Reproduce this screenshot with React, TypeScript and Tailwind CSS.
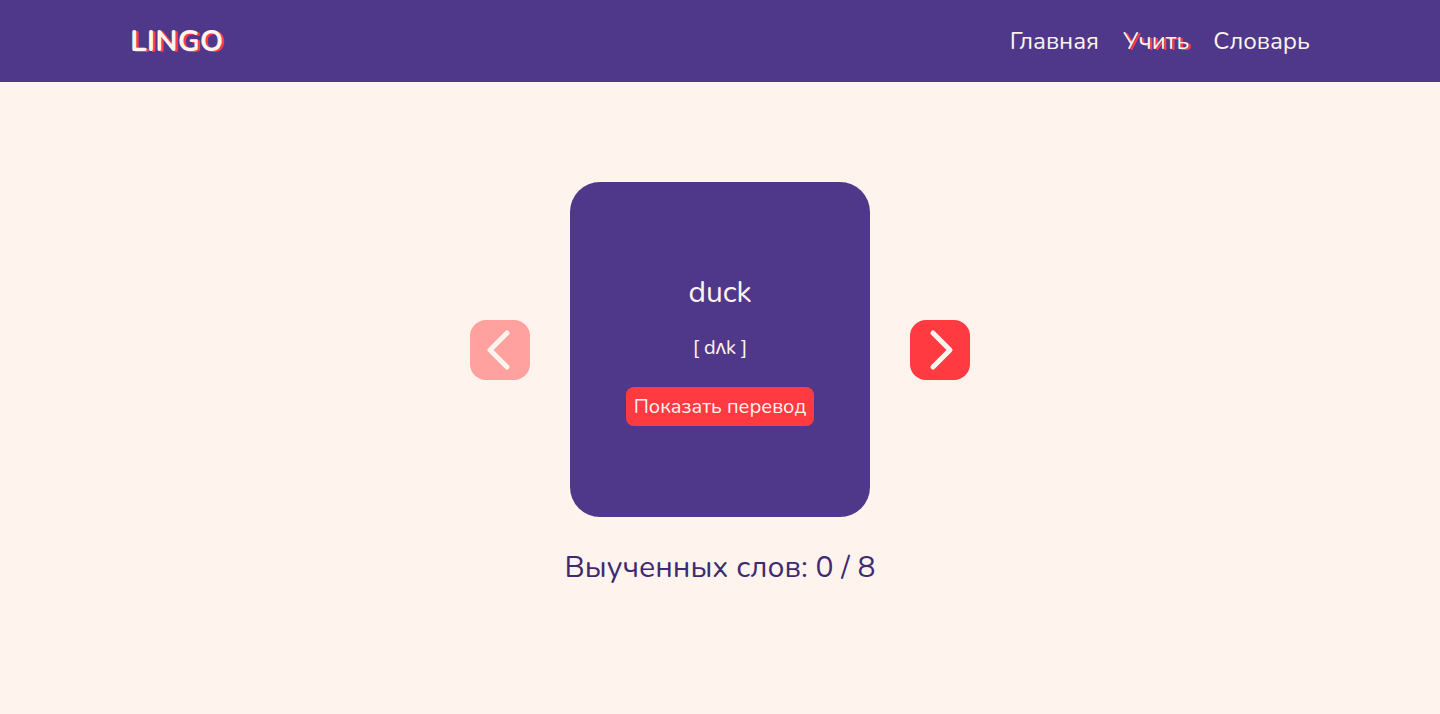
import React from "react";

export default function App() {
  const font = { fontFamily: '"Nunito", "Noto Sans", "Open Sans", sans-serif' };
  return (
    <div className="min-h-[714px] bg-[#FFF3EE]" style={font}>
      <header className="h-[82px] bg-[#4F3889]">
        <div className="mx-auto flex h-full w-[1180px] items-center justify-between">
          <div className="text-[30px] font-bold text-[#FFF3EE] [text-shadow:2px_1px_0_#FF3A40]">LINGO</div>
          <nav className="flex items-center gap-[24px] text-[24px] text-[#FFF3EE]">
            <span>Главная</span>
            <span className="[text-shadow:2px_1px_0_#FF3A40]">Учить</span>
            <span>Словарь</span>
          </nav>
        </div>
      </header>
      <main className="flex flex-col items-center pt-[100px]">
        <div className="flex items-center gap-[40px]">
          <button className="flex h-[60px] w-[60px] items-center justify-center rounded-[16px] bg-[#FFA19E]">
            <svg width="30" height="44" viewBox="0 0 30 44" fill="none">
              <path d="M22 5 L5 22 L22 39" stroke="#FFF3EE" strokeWidth="5" strokeLinecap="round" strokeLinejoin="round" />
            </svg>
          </button>
          <div className="flex h-[335px] w-[300px] flex-col items-center justify-center rounded-[30px] bg-[#4F3889] text-[#FFF3EE]">
            <div className="text-[30px] leading-[40px]">duck</div>
            <div className="mt-[22px] text-[20px] leading-[26px]">[ dʌk ]</div>
            <button className="mt-[26px] h-[39px] rounded-[8px] bg-[#FF3A40] px-[8px] text-[20px] text-[#FFF3EE]">Показать перевод</button>
          </div>
          <button className="flex h-[60px] w-[60px] items-center justify-center rounded-[16px] bg-[#FF3A40]">
            <svg width="30" height="44" viewBox="0 0 30 44" fill="none">
              <path d="M8 5 L25 22 L8 39" stroke="#FFF3EE" strokeWidth="5" strokeLinecap="round" strokeLinejoin="round" />
            </svg>
          </button>
        </div>
        <div className="mt-[28px] text-[30px] text-[#3E2A70]">Выученных слов: 0 / 8</div>
      </main>
    </div>
  );
}
